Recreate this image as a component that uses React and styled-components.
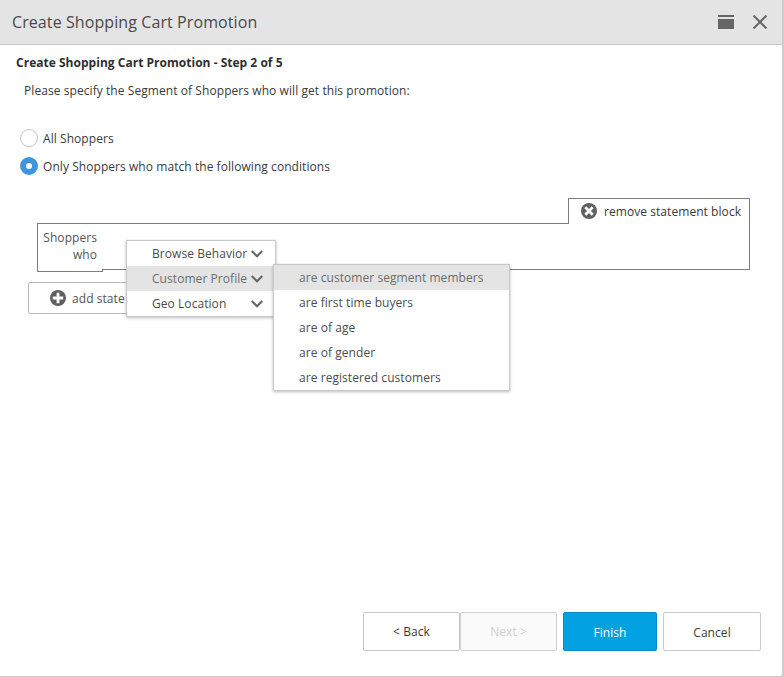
import React from "react";
import styled, { createGlobalStyle } from "styled-components";

const Global = createGlobalStyle`
  * { box-sizing: border-box; }
  body { margin: 0; background: #cdcdcd; overflow: hidden; }
`;

const Backdrop = styled.div`
  width: 784px;
  height: 677px;
  background: #cdcdcd;
  font-family: "Open Sans", "Noto Sans", sans-serif;
  font-size: 12px;
  letter-spacing: 0.06px;
  color: #3a3a3a;
`;

const Dialog = styled.div`
  width: 782px;
  height: 676px;
  background: #fff;
  border-bottom-right-radius: 2px;
  display: flex;
  flex-direction: column;
`;

const TitleBar = styled.header`
  height: 45px;
  flex: none;
  background: #e4e4e4;
  border-bottom: 1px solid #c8c8c8;
  display: flex;
  align-items: center;
  padding: 0 14px 0 12px;
`;

const Title = styled.h1`
  margin: 0;
  flex: 1;
  font-size: 16px;
  font-weight: 400;
  line-height: 22px;
  color: #4a4a4a;
  letter-spacing: 0.09px;
`;

const WindowIcons = styled.div`
  display: flex;
  align-items: center;
  gap: 18px;
  svg { display: block; }
`;

const Content = styled.main`
  flex: 1;
  padding: 9px 20px 0;
  display: flex;
  flex-direction: column;
`;

const StepTitle = styled.h2`
  margin: 0 0 0 -4px;
  font-size: 12px;
  line-height: 18px;
  font-weight: 700;
  letter-spacing: 0.02px;
  color: #2f2f2f;
`;

const Intro = styled.p`
  margin: 10px 0 29px 4px;
  line-height: 18px;
  letter-spacing: 0.07px;
`;

const Option = styled.label`
  display: flex;
  align-items: center;
  height: 18px;
  gap: 5px;
  margin-bottom: 10px;
`;

const Radio = styled.span`
  width: 18px;
  height: 18px;
  border-radius: 50%;
  background: #fff;
  border: ${(p) => (p.$checked ? "6px solid #3d95dc" : "1px solid #c6c6c6")};
`;

const OptionText = styled.span`
  line-height: 18px;
  padding-top: 1px;
`;

const Statement = styled.section`
  width: 713px;
  margin: 13px 0 0 17px;
`;

const TabRow = styled.div`
  display: flex;
  height: 26px;
`;

const TabLine = styled.div`
  flex: 1;
  border-bottom: 1px solid #7d7d7d;
`;

const RemoveTab = styled.div`
  width: 182px;
  border: 1px solid #7d7d7d;
  border-bottom: 0;
  padding: 4px 0 0 12px;
  display: flex;
  gap: 7px;
  line-height: 18px;
  svg { display: block; flex: none; }
`;

const StatementBody = styled.div`
  height: 48px;
  display: flex;
  align-items: flex-start;
`;

const Subject = styled.div`
  width: 66px;
  height: 48px;
  border: solid #7d7d7d;
  border-width: 0 0 1px 1px;
  padding: 5px 6px 0 0;
  text-align: right;
  line-height: 17px;
  color: #545454;
  position: relative;

  &::after {
    content: "";
    position: absolute;
    right: 0;
    bottom: 0;
    width: 1px;
    height: 2px;
    background: #7d7d7d;
  }
`;

const ConditionArea = styled.div`
  flex: 1;
  height: 46px;
  border: solid #7d7d7d;
  border-width: 0 1px 1px 0;
  position: relative;
`;

const Menu = styled.ul`
  position: absolute;
  left: ${(p) => p.$left}px;
  top: ${(p) => p.$top}px;
  width: ${(p) => p.$width}px;
  margin: 0;
  padding: 0;
  list-style: none;
  background: #fff;
  border: 1px solid #c8c8c8;
  box-shadow: 0 1px 3px rgba(0, 0, 0, 0.25);
`;

const MenuItem = styled.li`
  height: 25px;
  padding: 0 ${(p) => p.$right || 0}px 0 25px;
  display: flex;
  align-items: center;
  justify-content: space-between;
  line-height: 18px;
  color: ${(p) => (p.$active ? "#6c6c6c" : "#4c4c4c")};
  background: ${(p) => (p.$active ? "#e4e4e4" : "#fff")};
`;

const AddButton = styled.button`
  width: 170px;
  height: 32px;
  margin: 10px 0 0 8px;
  padding: 0 0 0 21px;
  display: flex;
  align-items: center;
  gap: 6px;
  font: inherit;
  letter-spacing: inherit;
  line-height: 18px;
  white-space: nowrap;
  color: #545454;
  background: #fff;
  border: 1px solid #b9b9b9;
  border-radius: 2px;
`;

const AddLabel = styled.span`
  padding-top: 1px;
`;

const Footer = styled.footer`
  height: 64px;
  flex: none;
  padding-right: 21px;
  display: flex;
  justify-content: flex-end;
`;

const tones = {
  plain: ["#fff", "#c8c8c8", "#3a3a3a"],
  disabled: ["#fafafa", "#d0d0d0", "#cfcfcf"],
  primary: ["#02a1e2", "#0789cb", "#fff"],
};

const Button = styled.button`
  width: ${(p) => p.$width}px;
  height: 39px;
  margin-left: ${(p) => p.$gap || 0}px;
  padding: ${(p) => p.$drop || 0}px 0 0;
  font: inherit;
  letter-spacing: inherit;
  line-height: 18px;
  background: ${(p) => tones[p.$tone][0]};
  border: 1px solid ${(p) => tones[p.$tone][1]};
  color: ${(p) => tones[p.$tone][2]};
  border-radius: 2px;
`;

const Chevron = () => (
  <svg width="12" height="8" viewBox="0 0 12 8">
    <path d="M.7 1 L6 6.2 L11.3 1" fill="none" stroke="#666" strokeWidth="2.1" />
  </svg>
);

const RoundIcon = ({ turned }) => (
  <svg width="16" height="16" viewBox="0 0 16 16">
    <circle cx="8" cy="8" r="8" fill="#606060" />
    <path
      d="M8 2.8v10.4M2.8 8h10.4"
      stroke="#fff"
      strokeWidth="2.8"
      transform={turned ? "rotate(45 8 8)" : undefined}
    />
  </svg>
);

const sections = ["Browse Behavior", "Customer Profile", "Geo Location"];
const conditions = [
  "are customer segment members",
  "are first time buyers",
  "are of age",
  "are of gender",
  "are registered customers",
];

export default function App() {
  return (
    <Backdrop>
      <Global />
      <Dialog>
        <TitleBar>
          <Title>Create Shopping Cart Promotion</Title>
          <WindowIcons>
            <svg width="16" height="14" viewBox="0 0 16 14">
              <path d="M0 0h16v2H0zM0 4h16v10H0z" fill="#666" />
            </svg>
            <svg width="16" height="14" viewBox="0 0 16 14">
              <path d="M1.5 .5l13 13M14.5 .5l-13 13" stroke="#666" strokeWidth="2" />
            </svg>
          </WindowIcons>
        </TitleBar>
        <Content>
          <StepTitle>Create Shopping Cart Promotion - Step 2 of 5</StepTitle>
          <Intro>Please specify the Segment of Shoppers who will get this promotion:</Intro>
          <Option>
            <Radio />
            <OptionText>All Shoppers</OptionText>
          </Option>
          <Option>
            <Radio $checked />
            <OptionText>Only Shoppers who match the following conditions</OptionText>
          </Option>
          <Statement>
            <TabRow>
              <TabLine />
              <RemoveTab>
                <RoundIcon turned />
                remove statement block
              </RemoveTab>
            </TabRow>
            <StatementBody>
              <Subject>
                Shoppers
                <br />
                who
              </Subject>
              <ConditionArea>
                <Menu $left={23} $top={16} $width={150}>
                  {sections.map((name, i) => (
                    <MenuItem key={name} $active={i === 1} $right={12}>
                      {name}
                      <Chevron />
                    </MenuItem>
                  ))}
                </Menu>
                <Menu $left={170} $top={40} $width={237}>
                  {conditions.map((name, i) => (
                    <MenuItem key={name} $active={i === 0}>
                      {name}
                    </MenuItem>
                  ))}
                </Menu>
              </ConditionArea>
            </StatementBody>
          </Statement>
          <AddButton>
            <RoundIcon />
            <AddLabel>add state</AddLabel>
          </AddButton>
        </Content>
        <Footer>
          <Button $tone="plain" $width={97}>&lt; Back</Button>
          <Button $tone="disabled" $width={97}>Next &gt;</Button>
          <Button $tone="primary" $width={94} $gap={6} $drop={2}>Finish</Button>
          <Button $tone="plain" $width={98} $gap={6} $drop={2}>Cancel</Button>
        </Footer>
      </Dialog>
    </Backdrop>
  );
}
